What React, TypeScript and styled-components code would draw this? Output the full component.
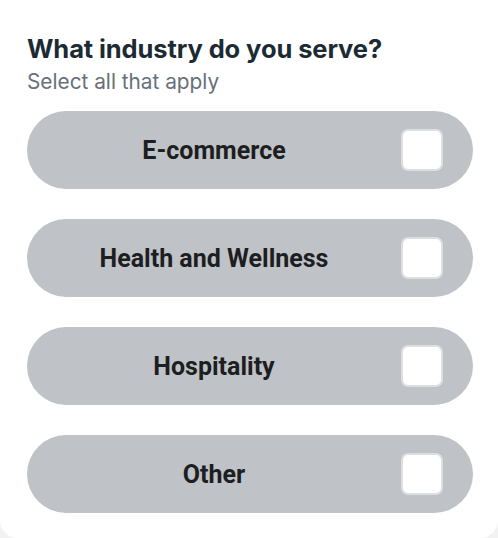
import styled, { createGlobalStyle } from 'styled-components';
import { useState } from 'react';

const GlobalStyle = createGlobalStyle`
  html, body {
    margin: 0;
    padding: 0;
    background: #f2f2f3;
  }
  * {
    box-sizing: border-box;
  }
`;

const Card = styled.div`
  width: 498px;
  height: 538px;
  background: #ffffff;
  border-radius: 0 0 18px 18px;
  padding: 33px 25px 0 27px;
  display: flex;
  flex-direction: column;
`;

const Title = styled.div`
  font-family: Inter, 'Noto Sans', sans-serif;
  font-weight: 700;
  font-size: 25.5px;
  line-height: 32px;
  color: #1c2b33;
  letter-spacing: -0.1px;
`;

const Subtitle = styled.div`
  font-family: Inter, 'Noto Sans', sans-serif;
  font-size: 20.8px;
  line-height: 24px;
  color: #67707a;
  margin-top: 5px;
  margin-bottom: 17px;
`;

const List = styled.div`
  display: flex;
  flex-direction: column;
  gap: 30px;
`;

const Option = styled.div`
  height: 78px;
  width: 446px;
  border-radius: 39px;
  background: #bfc2c6;
  display: flex;
  align-items: center;
  padding-right: 30px;
  cursor: pointer;
`;

const Label = styled.div`
  flex: 1;
  text-align: center;
  font-family: Roboto, 'Liberation Sans', sans-serif;
  font-weight: 700;
  font-size: 25px;
  color: #1c1e21;
`;

const Box = styled.div<{ $checked: boolean }>`
  width: 42px;
  height: 42px;
  border-radius: 7px;
  background: #ffffff;
  border: 2px solid #dcdee1;
  display: flex;
  align-items: center;
  justify-content: center;
  color: #1c1e21;
  font-size: 24px;
`;

const options = ['E-commerce', 'Health and Wellness', 'Hospitality', 'Other'];

export default function App() {
  const [selected, setSelected] = useState<string[]>([]);
  const toggle = (name: string) => {
    setSelected((prev) =>
      prev.includes(name) ? prev.filter((n) => n !== name) : [...prev, name]
    );
  };
  return (
    <>
      <GlobalStyle />
      <Card>
        <Title>What industry do you serve?</Title>
        <Subtitle>Select all that apply</Subtitle>
        <List>
          {options.map((name) => (
            <Option key={name} onClick={() => toggle(name)}>
              <Label>{name}</Label>
              <Box $checked={selected.includes(name)}>
                {selected.includes(name) ? '✓' : null}
              </Box>
            </Option>
          ))}
        </List>
      </Card>
    </>
  );
}
